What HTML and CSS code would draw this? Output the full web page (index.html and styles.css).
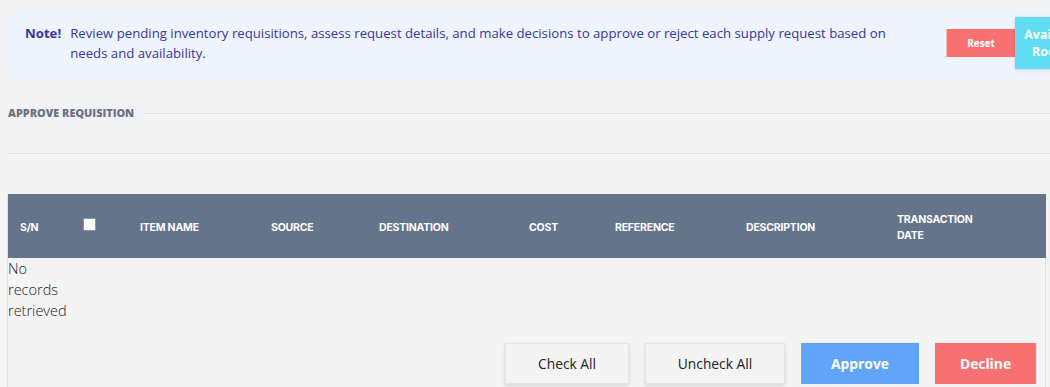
FILE: index.html
```html
<!DOCTYPE html>
<html>
<head>
<meta charset="utf-8">
<link rel="stylesheet" href="styles.css">
</head>
<body>
<div class="page">
  <div class="note">
    <div class="note-text"><span class="note-label">Note!</span><span class="note-body">Review pending inventory requisitions, assess request details, and make decisions to approve or reject each supply request based on needs and availability.</span></div>
    <div class="note-actions">
      <button class="btn-reset">Reset</button>
      <button class="btn-rooms">Available Rooms</button>
    </div>
  </div>

  <div class="section-head">
    <span class="section-title">Approve Requisition</span>
    <span class="section-line"></span>
  </div>
  <div class="divider"></div>

  <div class="card">
    <table class="grid">
      <colgroup>
        <col style="width:63px"><col style="width:57px"><col style="width:131px"><col style="width:108px"><col style="width:150px"><col style="width:86px"><col style="width:131px"><col style="width:151px"><col>
      </colgroup>
      <thead>
        <tr>
          <th>S/N</th>
          <th><span class="check"></span></th>
          <th>Item Name</th>
          <th>Source</th>
          <th>Destination</th>
          <th>Cost</th>
          <th>Reference</th>
          <th>Description</th>
          <th class="th-wrap">Transaction Date</th>
        </tr>
      </thead>
      <tbody>
        <tr>
          <td class="empty">No records retrieved</td>
          <td></td><td></td><td></td><td></td><td></td><td></td><td></td><td></td>
        </tr>
      </tbody>
    </table>
    <div class="actions">
      <button class="btn btn-light w-check">Check All</button>
      <button class="btn btn-light w-uncheck">Uncheck All</button>
      <button class="btn btn-blue">Approve</button>
      <button class="btn btn-red">Decline</button>
    </div>
  </div>
</div>
</body>
</html>
```

FILE: styles.css
```css
html, body {
  margin: 0;
  padding: 0;
  background: #f4f4f4;
  overflow: hidden;
  width: 1050px;
  height: 387px;
}
.page {
  padding: 7px 0 0 8px;
}
.note {
  width: 1038px;
  box-sizing: border-box;
  background: #eef5fe;
  border-radius: 9px;
  padding: 16px 0 16px 17px;
  display: flex;
  align-items: center;
  font-family: "Open Sans", "Noto Sans", sans-serif;
  font-size: 13.2px;
  line-height: 20px;
  color: #3a33a8;
  height: 72px;
}
.note-text {
  flex: 0 0 866px;
  margin-right: 55px;
  display: flex;
}
.note-label {
  font-weight: 700;
  margin-right: 9px;
  flex-shrink: 0;
}
.note-body {
  flex: 1;
}
.note-actions {
  flex: 0 0 auto;
  display: flex;
  align-items: center;
}
.note-actions button {
  border: none;
  color: #fff;
  font-family: "Open Sans", "Noto Sans", sans-serif;
  font-weight: 700;
  cursor: pointer;
}
.btn-reset {
  width: 69px;
  height: 28px;
  background: #f87171;
  font-size: 10px;
  border-left: 1px solid #f4b6b6 !important;
  padding: 0;
}
.btn-rooms {
  width: 76px;
  height: 52px;
  background: #61ddf1;
  font-size: 12.5px;
  line-height: 17px;
  padding: 0 6px;
  box-shadow: 0 1px 4px rgba(0,0,0,0.15);
}
.section-head {
  margin-top: 24px;
  display: flex;
  align-items: center;
  width: 1042px;
}
.section-title {
  background: #f1f3f8;
  font-family: "Open Sans", "Noto Sans", sans-serif;
  font-weight: 800;
  font-size: 10.9px;
  text-transform: uppercase;
  color: #6b7280;
  padding: 4px 11px 4px 0;
  line-height: 12px;
}
.section-line {
  flex: 1;
  height: 1px;
  background: #e2e2e2;
}
.divider {
  margin-top: 30px;
  height: 1px;
  background: #e2e2e2;
  width: 1042px;
}
.card {
  margin-top: 40px;
  margin-left: -1px;
  width: 1039px;
  border-left: 1px solid #e3e3e3;
  border-right: 1px solid #e3e3e3;
  box-sizing: border-box;
  height: 200px;
}
.grid {
  width: 1038px;
  border-collapse: collapse;
  table-layout: fixed;
}
.grid th {
  background: #64748b;
  color: #fff;
  font-family: Inter, "Noto Sans", sans-serif;
  font-weight: 700;
  font-size: 10.5px;
  letter-spacing: -0.2px;
  text-transform: uppercase;
  text-align: left;
  padding: 18px 12px 14px;
  height: 64px;
  box-sizing: border-box;
  line-height: 16px;
  vertical-align: middle;
}
.th-wrap {
  padding-right: 60px !important;
}
.check {
  display: inline-block;
  width: 11px;
  height: 11px;
  background: #fff;
  border: 1px solid #8a94a6;
  border-radius: 1px;
  margin-top: -8px;
  vertical-align: middle;
}
.grid td {
  padding: 0;
  vertical-align: top;
}
.empty {
  font-family: "Open Sans", Lato, sans-serif;
  font-weight: 300;
  font-size: 14.5px;
  line-height: 21px;
  color: #222;
}
.actions {
  display: flex;
  justify-content: flex-end;
  gap: 16px;
  padding: 22px 9px 0 0;
}
.btn {
  height: 41px;
  font-family: "Open Sans", "Noto Sans", sans-serif;
  font-size: 13.8px;
  border: none;
  padding: 0;
}
.btn-light {
  background: #f4f4f4;
  color: #222;
  border: 1px solid #e4e4e4;
  box-shadow: 0 2px 4px rgba(0,0,0,0.12);
}
.w-check { width: 124px; }
.w-uncheck { width: 140px; }
.btn-blue {
  width: 118px;
  background: #60a5fa;
  color: #fff;
  font-weight: 700;
}
.btn-red {
  width: 101px;
  background: #f87171;
  color: #fff;
  font-weight: 700;
}
```
